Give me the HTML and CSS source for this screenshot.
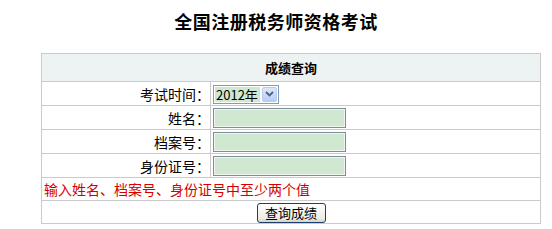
FILE: index.html
```html
<!DOCTYPE html>
<html lang="zh-CN">
<head>
    <meta charset="UTF-8">
    <title>全国注册税务师资格考试 - 成绩查询</title>
    <link rel="stylesheet" href="styles.css">
</head>
<body>

    <h1 class="titulo">全国注册税务师资格考试</h1>

    <table class="tabela-consulta">
        <tr>
            <th colspan="2" class="cabecalho">成绩查询</th>
        </tr>
        <tr>
            <td class="rotulo">考试时间：</td>
            <td class="campo">
                <span class="select-ano">
                    <span class="select-valor">2012年</span>
                    <span class="select-seta">
                        <svg width="9" height="6" viewBox="0 0 9 6"><path d="M1 1 L4.5 4.5 L8 1" fill="none" stroke="#4d6185" stroke-width="1.8"/></svg>
                    </span>
                </span>
            </td>
        </tr>
        <tr>
            <td class="rotulo">姓名：</td>
            <td class="campo"><input type="text" class="entrada"></td>
        </tr>
        <tr>
            <td class="rotulo">档案号：</td>
            <td class="campo"><input type="text" class="entrada"></td>
        </tr>
        <tr>
            <td class="rotulo">身份证号：</td>
            <td class="campo"><input type="text" class="entrada"></td>
        </tr>
        <tr>
            <td colspan="2" class="aviso">输入姓名、档案号、身份证号中至少两个值</td>
        </tr>
        <tr>
            <td colspan="2" class="linha-botao"><button class="botao">查询成绩</button></td>
        </tr>
    </table>

</body>
</html>
```

FILE: styles.css
```css
body {
    margin: 0;
    padding: 0;
    background-color: #fff;
    font-family: "Noto Sans CJK SC", sans-serif;
    font-size: 13px;
    color: #000;
}

.titulo {
    margin: 0;
    padding-top: 10px;
    height: 53px;
    line-height: 22px;
    box-sizing: border-box;
    text-align: center;
    font-size: 18px;
    font-weight: bold;
    letter-spacing: 0.5px;
}

.tabela-consulta {
    margin-left: 41px;
    width: 500px;
    border-collapse: collapse;
}

.tabela-consulta th,
.tabela-consulta td {
    border: 1px solid #cacaca;
    padding: 0;
}

.cabecalho {
    height: 27px;
    background-color: #edf3f3;
    font-size: 13px;
    font-weight: bold;
    text-align: center;
}

.rotulo {
    width: 168px;
    height: 23px;
    text-align: right;
    font-size: 14px;
}

.campo {
    height: 23px;
    padding-left: 2px !important;
}

.select-ano {
    display: inline-flex;
    align-items: center;
    gap: 2px;
    height: 19px;
    box-sizing: border-box;
    border: 1px solid #7f9db9;
    padding: 1px;
    vertical-align: middle;
    white-space: nowrap;
}

.select-valor {
    background-color: #cfe8cf;
    font-size: 13px;
    line-height: 15px;
    padding: 0 2px 0 1px;
}

.select-seta {
    display: flex;
    align-items: center;
    justify-content: center;
    width: 15px;
    height: 15px;
    box-sizing: border-box;
    border: 1px solid #b8cbf0;
    border-radius: 2px;
    background: linear-gradient(#dce7fb, #b9cdf5);
}

.entrada {
    width: 133px;
    height: 20px;
    box-sizing: border-box;
    margin: 0;
    border: 1px solid #7f8e9c;
    box-shadow: inset 0 0 0 1px #eef5ee;
    background-color: #cfe8cf;
    vertical-align: middle;
}

.aviso {
    height: 22px;
    padding-left: 2px !important;
    color: #d40000;
    font-size: 14px;
}

.linha-botao {
    height: 22px;
    text-align: center;
}

.botao {
    width: 69px;
    height: 20px;
    padding: 0;
    font-family: "Noto Sans CJK SC", sans-serif;
    font-size: 13px;
    line-height: 16px;
    border: 1px solid #1c3f6e;
    border-radius: 3px;
    background: linear-gradient(#ffffff, #ecebe4 80%, #d6d0c5);
    vertical-align: middle;
    cursor: pointer;
}
```
